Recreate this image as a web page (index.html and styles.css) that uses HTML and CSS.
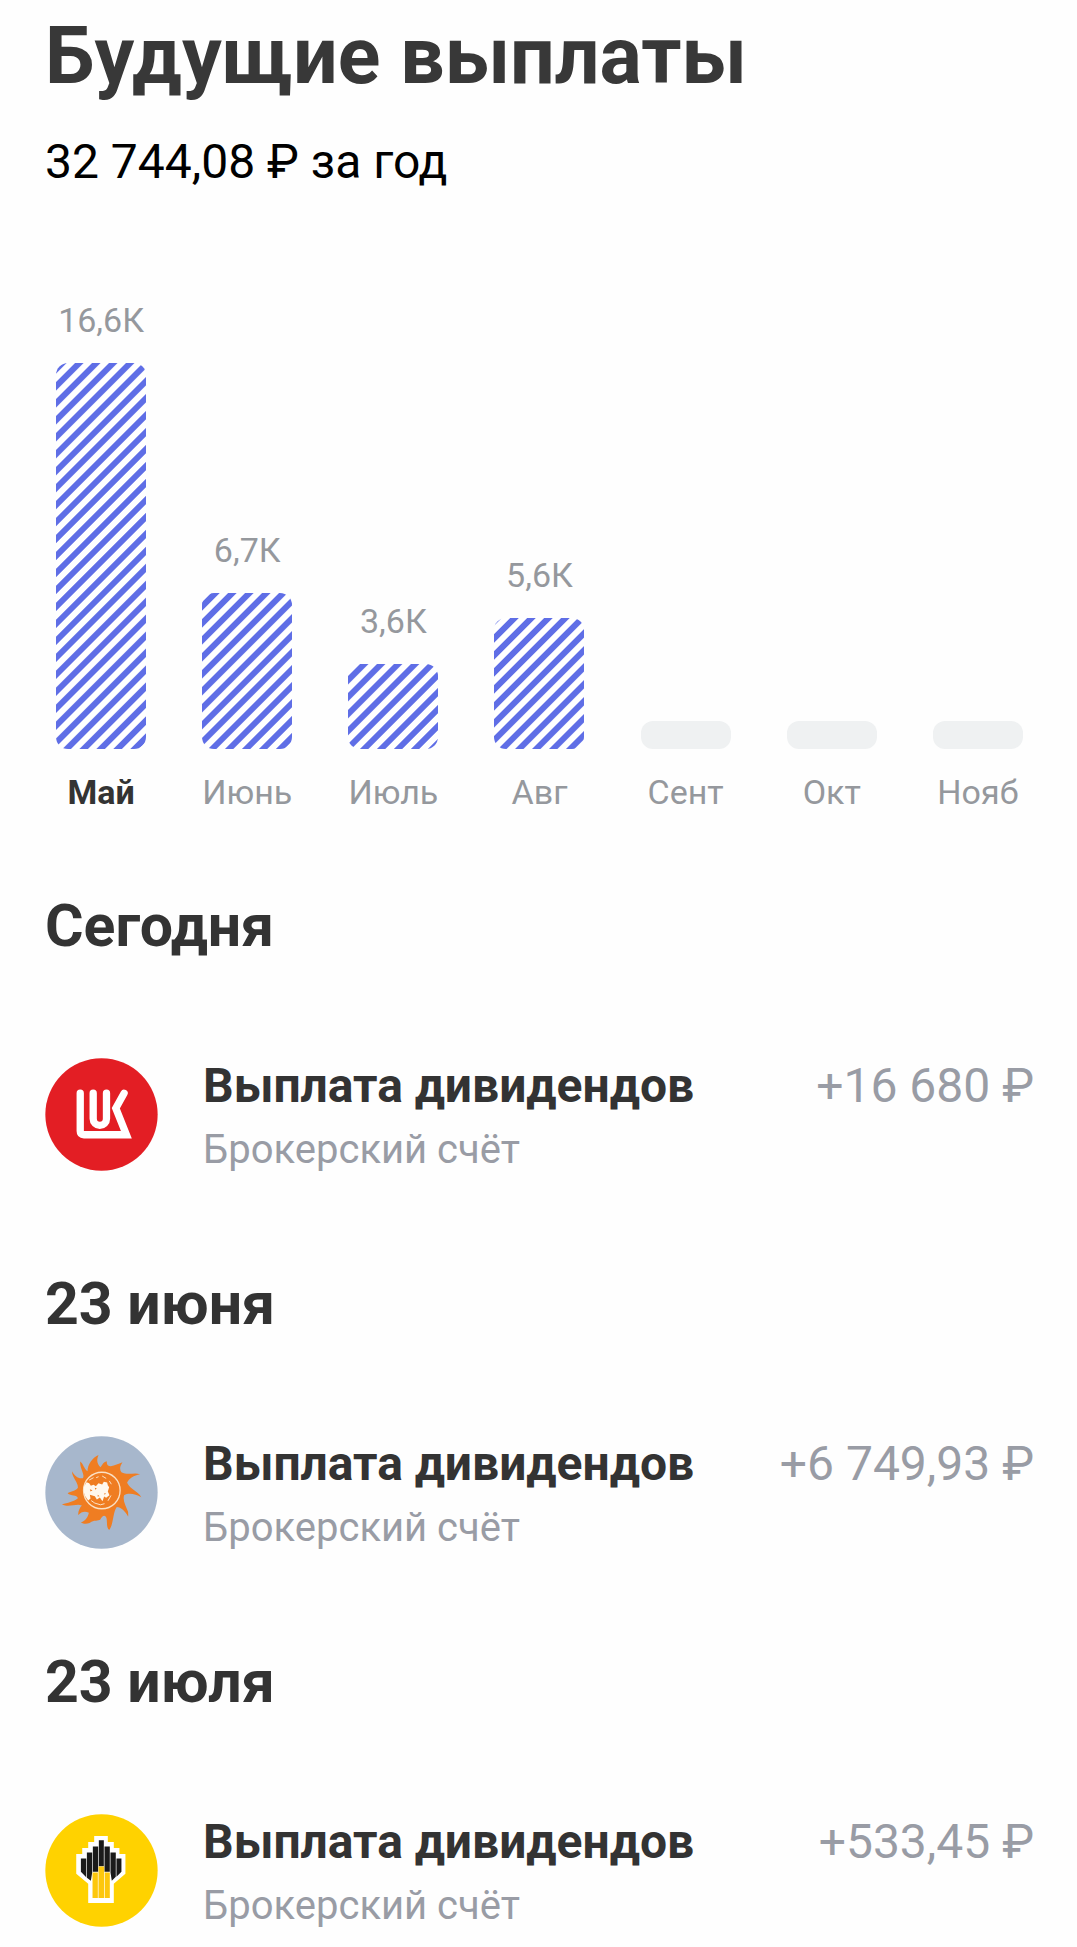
FILE: index.html
```html
<!DOCTYPE html>
<html lang="ru">
<head>
    <meta charset="UTF-8">
    <meta name="viewport" content="width=device-width, initial-scale=1.0">
    <title>Будущие выплаты</title>
    <link rel="stylesheet" href="styles.css">
</head>
<body>
    <main class="page">
        <h1>Будущие выплаты</h1>
        <p class="total">32 744,08 ₽ за год</p>

        <!-- Bar heights come from the monthly totals -->
        <div class="chart">
            <div class="month active">
                <span class="value">16,6К</span>
                <div class="bar" style="height: 386px"></div>
                <span class="name">Май</span>
            </div>
            <div class="month">
                <span class="value">6,7К</span>
                <div class="bar" style="height: 156px"></div>
                <span class="name">Июнь</span>
            </div>
            <div class="month">
                <span class="value">3,6К</span>
                <div class="bar" style="height: 85px"></div>
                <span class="name">Июль</span>
            </div>
            <div class="month">
                <span class="value">5,6К</span>
                <div class="bar" style="height: 131px"></div>
                <span class="name">Авг</span>
            </div>
            <div class="month">
                <div class="bar empty"></div>
                <span class="name">Сент</span>
            </div>
            <div class="month">
                <div class="bar empty"></div>
                <span class="name">Окт</span>
            </div>
            <div class="month">
                <div class="bar empty"></div>
                <span class="name">Нояб</span>
            </div>
        </div>

        <section>
            <h2>Сегодня</h2>
            <div class="payment">
                <svg class="logo" viewBox="30 36 340 340" aria-hidden="true">
                    <circle cx="200" cy="206" r="169" fill="#e31e24"/>
                    <g fill="none" stroke="#fff" stroke-width="22" stroke-linecap="round">
                        <path d="M136 142V256q0 11 11 11H275L243 187L268 142"/>
                        <path d="M175 142V219a20 20 0 0 0 40 0V142"/>
                    </g>
                </svg>
                <div class="info">
                    <h3>Выплата дивидендов</h3>
                    <p class="account">Брокерский счёт</p>
                </div>
                <span class="amount">+16 680 ₽</span>
            </div>
        </section>

        <section>
            <h2>23 июня</h2>
            <div class="payment">
                <svg class="logo" viewBox="30 30 340 340" aria-hidden="true">
                    <circle cx="200" cy="200" r="169" fill="#a7b7cc"/>
                    <path fill="#ef7d22" d="M158 136C158 116 172 96 191 87C184 103 187 115 197 124C203 115 207 108 216 106C215 117 219 121 228 121C240 119 251 114 263 109C256 120 253 130 260 139C278 149 299 139 316 145C298 149 282 157 277 171C287 192 307 194 320 214C302 204 282 200 268 208C263 225 273 240 280 258C280 264 281 269 280 272C271 257 259 244 246 244C234 258 237 295 223 313C214 305 218 291 215 277C210 265 203 270 196 282C180 288 182 280 164 292C155 295 146 295 138 290C153 285 159 274 162 261C150 255 139 258 130 268C129 257 134 246 141 239C125 232 103 246 81 236C98 230 116 228 129 217C126 206 108 211 98 202C108 196 122 197 129 186C130 168 112 157 111 136C119 149 130 160 144 157C151 145 134 128 136 107C145 113 147 129 158 136Z"/>
                    <circle cx="201" cy="194" r="55" fill="#ef7d22" stroke="#fbe1c5" stroke-width="4"/>
                    <path fill="#fff8ee" d="M147 183L155 169L163 172L168 180L176 177L183 181L191 172L202 176L207 168L217 170L219 178L223 184L219 197L224 208L214 216L208 212L203 226L195 215L186 221L180 211L165 207L167 218L160 224L151 211L147 200Z"/>
                    <path fill="none" stroke="#fbe1c5" stroke-width="3" stroke-linecap="round" d="M164 162L175 156M185 155L190 153M203 151L213 157M224 166L229 174M228 210L220 224M208 234L197 237L180 232L170 225"/>
                    <path fill="#ef7d22" d="M180 186L186 188L181 192ZM165 190L173 193L167 197ZM208 202L214 203L209 207ZM189 207L194 211L188 212Z"/>
                </svg>
                <div class="info">
                    <h3>Выплата дивидендов</h3>
                    <p class="account">Брокерский счёт</p>
                </div>
                <span class="amount">+6 749,93 ₽</span>
            </div>
        </section>

        <section>
            <h2>23 июля</h2>
            <div class="payment">
                <svg class="logo" viewBox="30 30 340 340" aria-hidden="true">
                    <circle cx="200" cy="200" r="169" fill="#ffd200"/>
                    <path fill="#fff" d="M178 96H219V114H237V132H254V150H272V210L237 240V298H160V240L124 210V150H142V132H160V114H178Z"/>
                    <path fill="#1a1a1a" d="M138 164H154V220L138 204ZM156 146H172V206L168 231L156 222ZM174 128H190V204H174ZM192 109H207V187H192ZM209 128H225V204H209ZM227 146H243V219L231 231L227 206ZM245 164H260V204L245 219Z"/>
                    <path fill="#fdc70c" d="M173 206H189V283H173ZM191 188H208V283H191ZM210 206H225V283H210Z"/>
                </svg>
                <div class="info">
                    <h3>Выплата дивидендов</h3>
                    <p class="account">Брокерский счёт</p>
                </div>
                <span class="amount">+533,45 ₽</span>
            </div>
        </section>
    </main>
</body>
</html>
```

FILE: styles.css
```css
* {
    box-sizing: border-box;
}

body {
    margin: 0;
    font-family: Roboto, sans-serif;
    background: #fefefe;
    color: #333;
}

h1, h2, h3, p {
    margin: 0;
}

.page {
    padding: 8px 43px 16px 45px;
}

h1 {
    font-size: 79px;
    line-height: 96px;
    font-weight: bold;
    color: #383838;
}

.total {
    margin-top: 28px;
    font-size: 48px;
    line-height: 60px;
    color: #000;
}

.chart {
    display: grid;
    grid-template-columns: repeat(7, 1fr);
    align-items: end;
    margin: 108px -17px 0;
}

.month {
    display: flex;
    flex-direction: column;
    align-items: center;
    gap: 23px;
    font-size: 34px;
    line-height: 40px;
    color: #95989d;
}

.active .name {
    font-weight: bold;
    color: #333;
}

.bar {
    --shift: 0px;
    width: 90px;
    border-radius: 12px;
    background: repeating-linear-gradient(135deg,
        #fff var(--shift),
        #fff calc(var(--shift) + 1px),
        #5f6ee6 calc(var(--shift) + 2px),
        #5f6ee6 calc(var(--shift) + 7px),
        #fff calc(var(--shift) + 8px),
        #fff calc(var(--shift) + 12px));
}

/* Stripes start at a different point in each month */
.month:nth-child(2) .bar {
    --shift: 5px;
}

.month:nth-child(3) .bar {
    --shift: 7px;
}

.month:nth-child(4) .bar {
    --shift: 10px;
}

.bar.empty {
    height: 28px;
    background: #eff1f2;
}

h2 {
    margin-top: 78px;
    font-size: 59px;
    line-height: 72px;
    font-weight: bold;
}

section + section h2 {
    margin-top: 94px;
}

.payment {
    display: flex;
    align-items: flex-start;
    margin-top: 96px;
}

.logo {
    flex: none;
    width: 113px;
    height: 113px;
    margin-right: 45px;
}

.info {
    flex: 1;
}

h3 {
    font-size: 48px;
    line-height: 56px;
    font-weight: bold;
}

.account {
    margin-top: 12px;
    font-size: 40px;
    line-height: 48px;
    color: #999ca5;
}

.amount {
    font-size: 48px;
    line-height: 56px;
    color: #999ca5;
    white-space: nowrap;
}
```
